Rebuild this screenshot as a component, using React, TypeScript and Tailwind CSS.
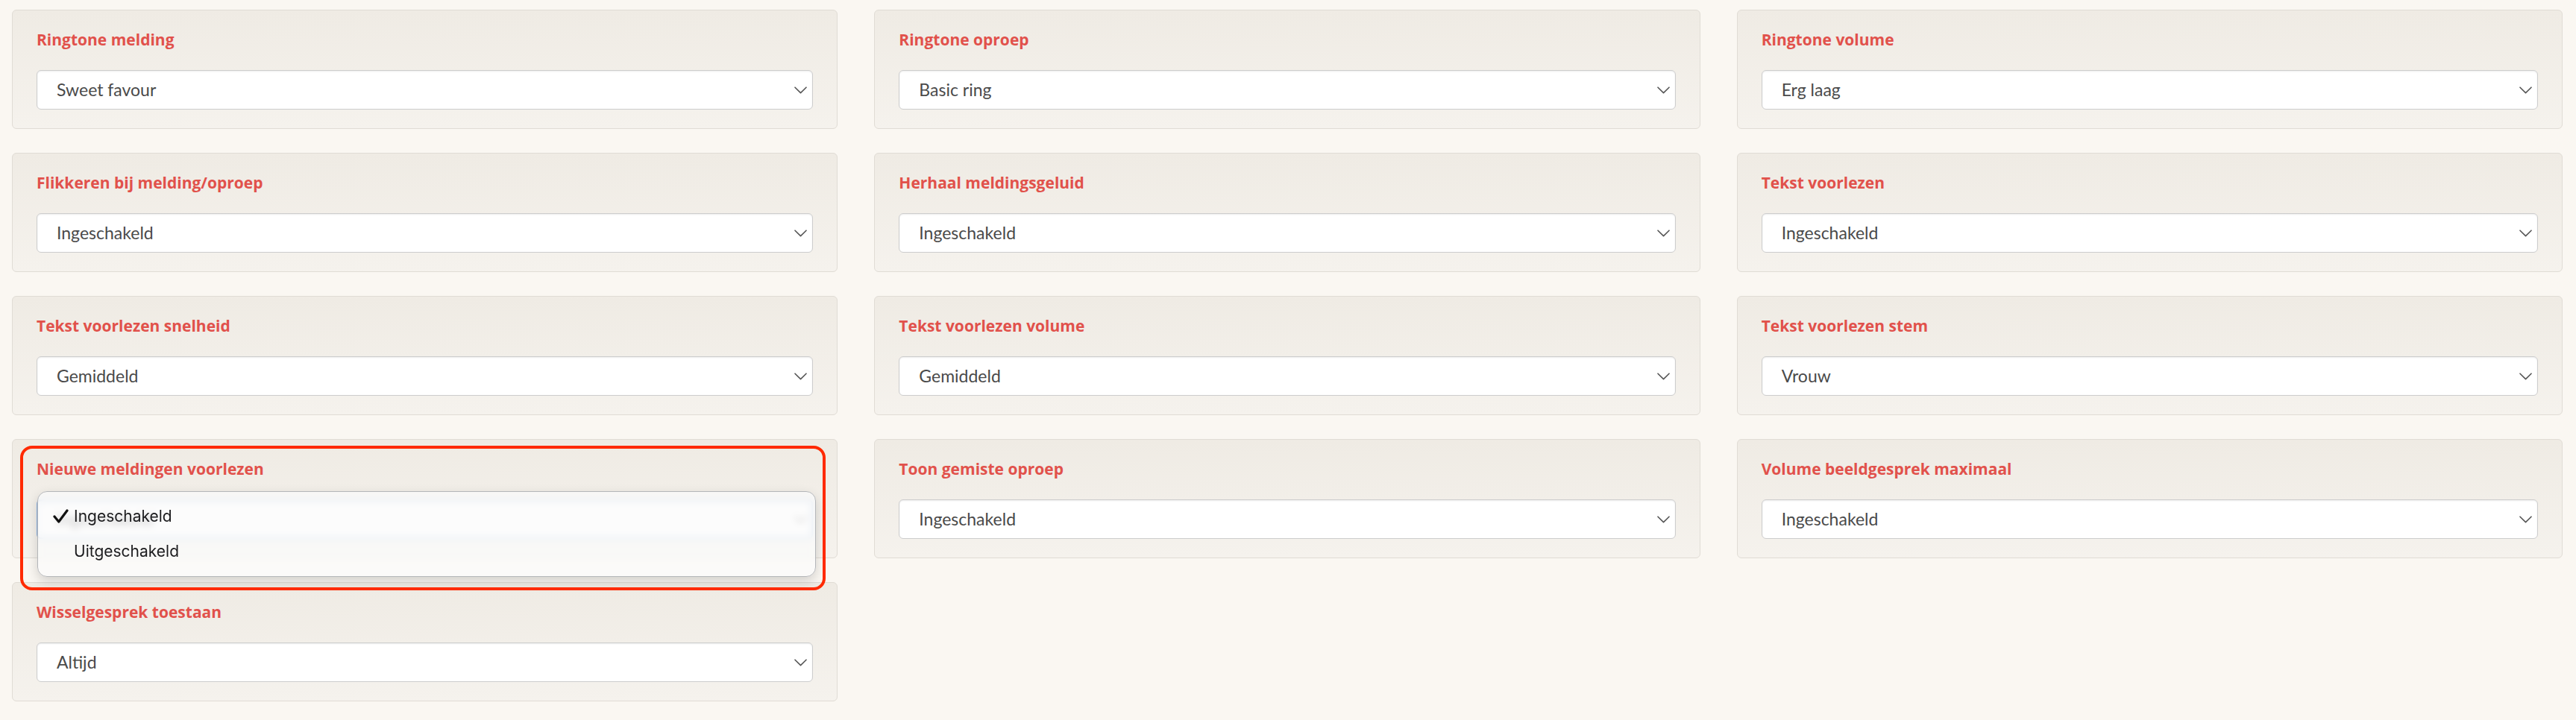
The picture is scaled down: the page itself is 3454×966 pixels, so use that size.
import React from "react";

type Setting = { label: string; value: string; open?: boolean };

const settings: Setting[] = [
  { label: "Ringtone melding", value: "Sweet favour" },
  { label: "Ringtone oproep", value: "Basic ring" },
  { label: "Ringtone volume", value: "Erg laag" },
  { label: "Flikkeren bij melding/oproep", value: "Ingeschakeld" },
  { label: "Herhaal meldingsgeluid", value: "Ingeschakeld" },
  { label: "Tekst voorlezen", value: "Ingeschakeld" },
  { label: "Tekst voorlezen snelheid", value: "Gemiddeld" },
  { label: "Tekst voorlezen volume", value: "Gemiddeld" },
  { label: "Tekst voorlezen stem", value: "Vrouw" },
  { label: "Nieuwe meldingen voorlezen", value: "Ingeschakeld", open: true },
  { label: "Toon gemiste oproep", value: "Ingeschakeld" },
  { label: "Volume beeldgesprek maximaal", value: "Ingeschakeld" },
  { label: "Wisselgesprek toestaan", value: "Altijd" },
];

function Chevron() {
  return (
    <svg width="17" height="10" viewBox="0 0 17 10" fill="none">
      <path d="M1 1.2 L8.5 8.6 L16 1.2" stroke="#555555" strokeWidth="1.6" strokeLinecap="round" strokeLinejoin="round" />
    </svg>
  );
}

function Check() {
  return (
    <svg width="21" height="19" viewBox="0 0 21 19" fill="none">
      <path d="M2 10 L7.8 17 L19 2" stroke="#111111" strokeWidth="3.2" strokeLinecap="round" strokeLinejoin="round" />
    </svg>
  );
}

function SelectBox({ value, focused }: { value: string; focused?: boolean }) {
  return (
    <div
      className={
        focused
          ? "mt-[27px] flex h-[53px] items-center justify-between rounded-[6px] border-2 border-[#8fb4e3] bg-white pl-[25px] pr-[6px] shadow-[inset_0_1px_2px_rgba(0,0,0,0.08)]"
          : "mt-[27px] flex h-[53px] items-center justify-between rounded-[6px] border border-[#cdcdcd] bg-white pl-[26px] pr-[7px] shadow-[inset_0_1px_2px_rgba(0,0,0,0.08)]"
      }
    >
      <span className="font-['Lato',sans-serif] text-[23px] leading-none text-[#4a4a4a]">{value}</span>
      <Chevron />
    </div>
  );
}

function OpenMenu() {
  return (
    <>
      {/* red outline drawn around the opened field */}
      <div className="pointer-events-none absolute left-[10px] right-[15px] top-[8px] z-30 h-[194px] rounded-[16px] border-[4px] border-[#ff2a00]" />
      {/* option list */}
      <div className="absolute left-[33px] right-[28px] top-[69px] z-20 h-[115px] rounded-[13px] border border-[#b4b6b9] bg-[rgba(251,251,251,0.72)] pb-[11px] pt-[9px] shadow-[0_6px_16px_rgba(0,0,0,0.16)] backdrop-blur-[5px]">
        <div className="flex h-[47px] items-center font-['Inter',sans-serif] text-[21px] text-[#1c1c1e]">
          <div className="flex w-[48px] justify-end pr-[7px]">
            <Check />
          </div>
          <span>Ingeschakeld</span>
        </div>
        <div className="flex h-[47px] items-center font-['Inter',sans-serif] text-[21px] text-[#1c1c1e]">
          <div className="w-[48px]" />
          <span>Uitgeschakeld</span>
        </div>
      </div>
    </>
  );
}

function Card({ s }: { s: Setting }) {
  return (
    <div
      className={
        (s.open ? "relative z-10 " : "") +
        "h-[160px] rounded-[6px] border border-[#e0dcd5] bg-gradient-to-b from-[#efebe4] to-[#f5f2ed] px-[32px] pt-[25px]"
      }
    >
      <div className="font-['Open_Sans',sans-serif] text-[21px] font-bold leading-[28px] text-[#e1514b]">{s.label}</div>
      <SelectBox value={s.value} focused={s.open} />
      {s.open && <OpenMenu />}
    </div>
  );
}

export default function App() {
  return (
    <div className="min-h-screen bg-[#faf7f2] pb-[24px] pl-[16px] pr-[18px] pt-[13px]">
      <div className="grid grid-cols-3 gap-x-[49px] gap-y-[32px]">
        {settings.map((s) => (
          <Card key={s.label} s={s} />
        ))}
      </div>
    </div>
  );
}
